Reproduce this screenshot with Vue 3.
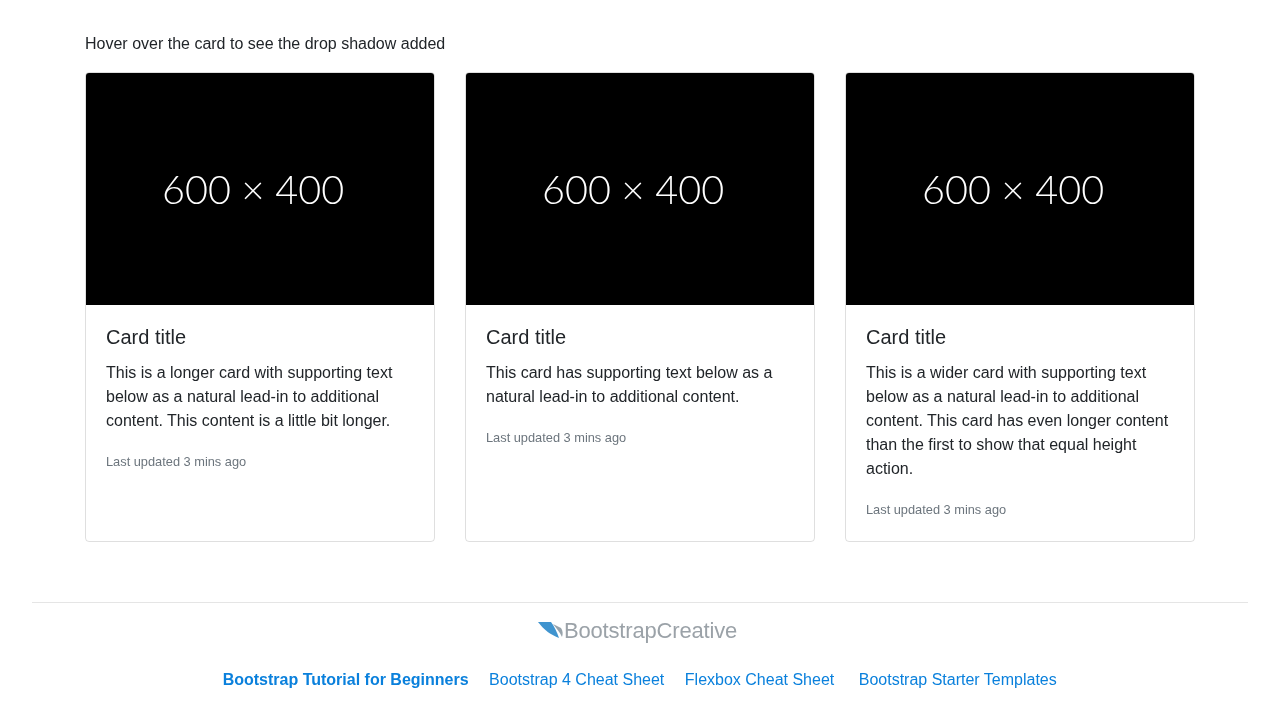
<script setup>
const cards = [
  { text: 'This is a longer card with supporting text below as a natural lead-in to additional content. This content is a little bit longer.' },
  { text: 'This card has supporting text below as a natural lead-in to additional content.' },
  { text: 'This is a wider card with supporting text below as a natural lead-in to additional content. This card has even longer content than the first to show that equal height action.' }
]
</script>

<template>
  <div class="page">
    <main class="container">
      <p class="intro">Hover over the card to see the drop shadow added</p>
      <div class="deck">
        <article v-for="(card, i) in cards" :key="i" class="card">
          <div class="thumb"><span class="thumb-text">600 × 400</span></div>
          <div class="body">
            <h5 class="title">Card title</h5>
            <p class="desc">{{ card.text }}</p>
            <p class="meta"><small>Last updated 3 mins ago</small></p>
          </div>
        </article>
      </div>
    </main>
    <footer class="footer">
      <div class="logo">
        <svg class="mark" width="26" height="20" viewBox="0 0 26 20">
          <path d="M0 2 H13 C16 6 19 12 21 18 C13 15 6 10 0 2 Z" fill="#3f94cf" />
          <path d="M15 4 L23 8 C25 11 25 14 24 17 C22 12 18 8 15 4 Z" fill="#98a3ab" />
        </svg>
        <span class="wordmark">BootstrapCreative</span>
      </div>
      <nav class="links">
        <a class="strong">Bootstrap Tutorial for Beginners</a>
        <a>Bootstrap 4 Cheat Sheet</a>
        <a>Flexbox Cheat Sheet</a>
        <a class="last">Bootstrap Starter Templates</a>
      </nav>
    </footer>
  </div>
</template>

<style>
body { background: #fff; }
</style>

<style scoped>
.page {
  font-family: "Liberation Sans", Arial, sans-serif;
  font-size: 16px;
  line-height: 1.5;
  color: #212529;
  will-change: transform;
}
.container {
  width: 1110px;
  margin: 0 auto;
  padding-top: 32px;
}
.intro { margin: 0 0 16px; }
.deck {
  display: grid;
  grid-template-columns: repeat(3, 350px);
  gap: 30px;
}
.card {
  border: 1px solid rgba(0, 0, 0, 0.125);
  border-radius: 4px;
  overflow: hidden;
}
.thumb {
  height: 232px;
  background: #000;
  display: flex;
  align-items: center;
  padding-left: 76px;
  box-sizing: border-box;
}
.thumb-text {
  font-family: Lato, sans-serif;
  font-weight: 300;
  font-size: 39.6px;
  color: #fff;
  white-space: pre;
}
.body { padding: 20px; }
.title {
  margin: 0 0 12px;
  font-size: 20px;
  line-height: 1.2;
  font-weight: 500;
}
.desc { margin: 0 0 16px; }
.meta { margin: 0; color: #6c757d; }
.meta small { font-size: 12.8px; }
.footer {
  width: 1216px;
  margin: 60px auto 0;
  border-top: 1px solid rgba(0, 0, 0, 0.1);
}
.logo {
  display: flex;
  justify-content: center;
  align-items: center;
  height: 24px;
  margin-top: 15px;
  padding-right: 5px;
}
.wordmark {
  font-size: 22px;
  letter-spacing: -0.17px;
  color: #9ba2a8;
}
.links {
  display: flex;
  justify-content: center;
  margin-top: 26px;
  padding-right: 0.6px;
  color: #0a80dc;
}
.links a { margin-right: 20.5px; }
.links a.strong { font-weight: 700; }
.links a.last { margin-left: 4px; margin-right: 0; }
</style>
